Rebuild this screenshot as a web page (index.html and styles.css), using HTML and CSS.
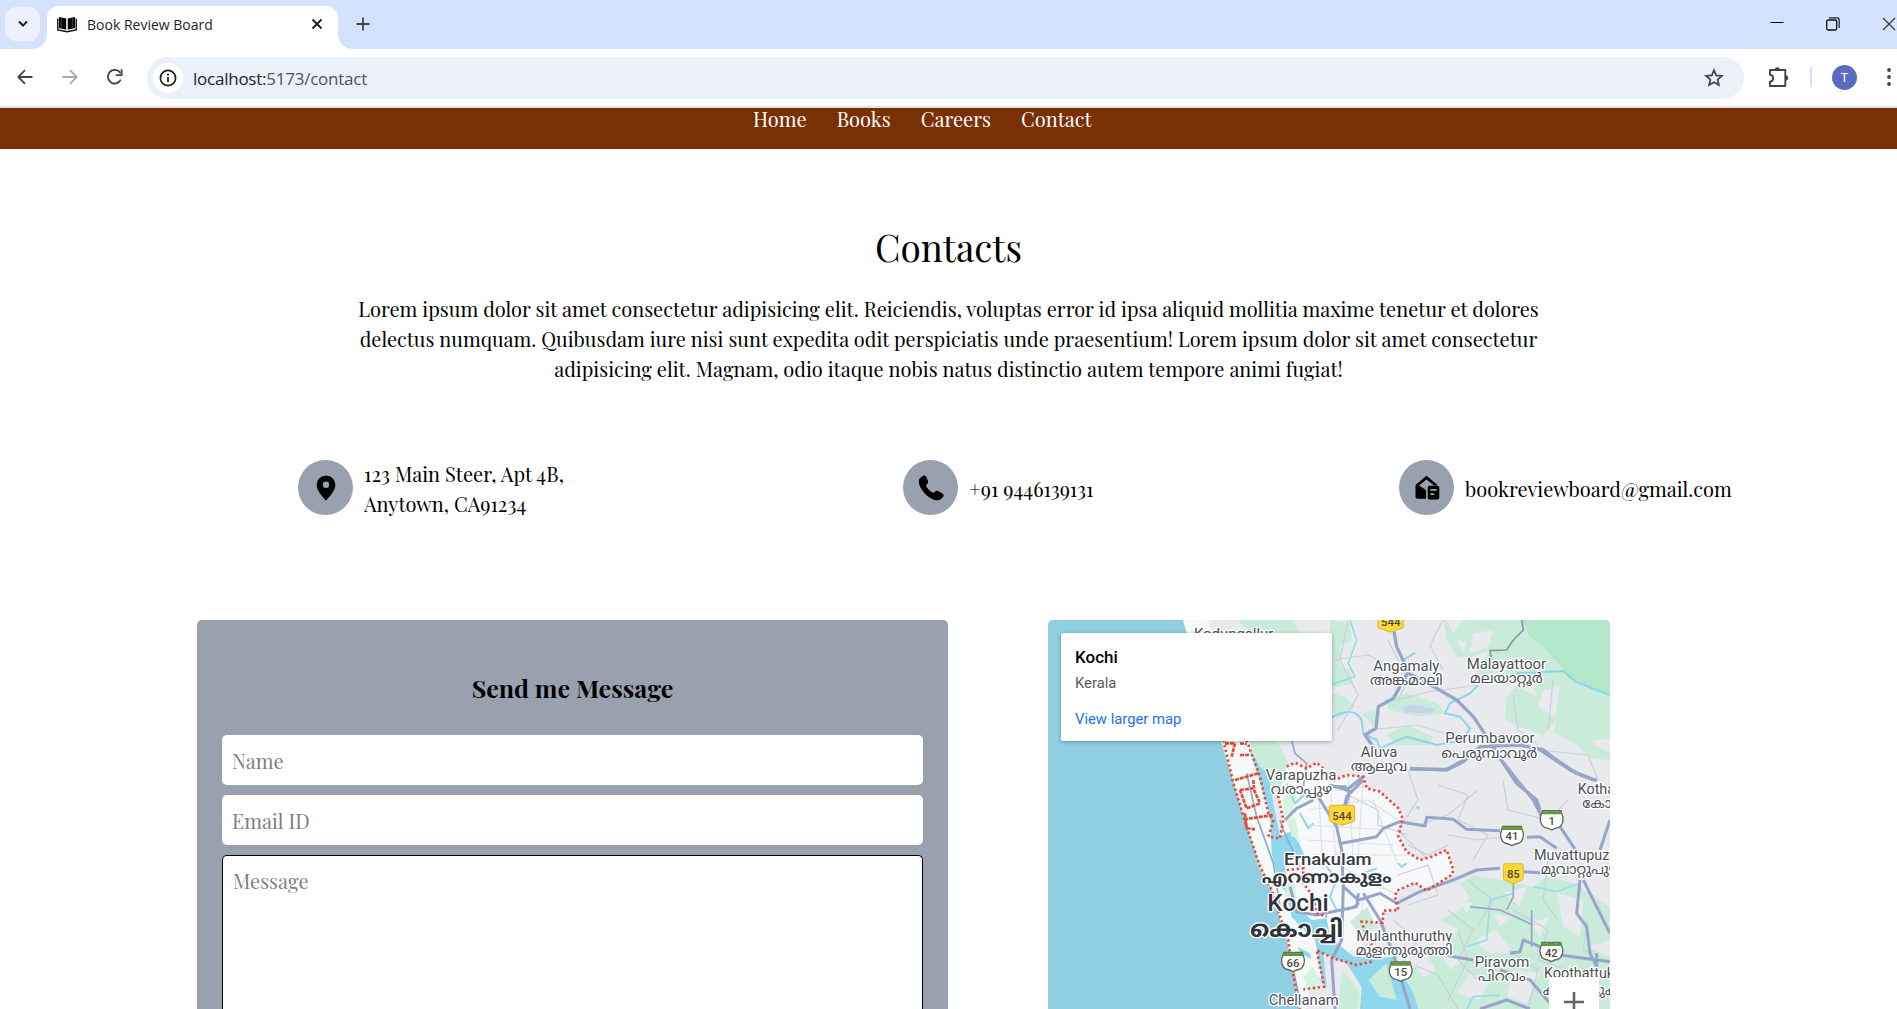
FILE: index.html
```html
<!DOCTYPE html>
<html lang="en">
<head>
<meta charset="utf-8">
<title>Book Review Board</title>
<link rel="stylesheet" href="styles.css">
</head>
<body>
<header class="tabstrip">
  <div class="tab-search"><svg width="12" height="8" viewBox="0 0 12 8"><path d="M2 1.5 6 5.5 10 1.5" fill="none" stroke="#1f1f1f" stroke-width="2"/></svg></div>
  <div class="tab">
    <svg class="favicon" width="20" height="17" viewBox="0 0 20 17"><path d="M2 1 9.2 2.6V13.8L2 12ZM18 1 10.8 2.6V13.8L18 12Z" fill="#000"/><path d="M.8 2.5V14L10 15.8 19.2 14V2.5" fill="none" stroke="#111" stroke-width="1.4"/><path d="M4.2 2V12.2M15.8 2V12.2" stroke="#777" stroke-width=".6"/></svg>
    <span class="tab-title">Book Review Board</span>
    <svg class="tab-close" width="12" height="12" viewBox="0 0 12 12"><path d="M1.5 1.5 10.5 10.5M10.5 1.5 1.5 10.5" stroke="#1f1f1f" stroke-width="1.9"/></svg>
  </div>
  <svg class="new-tab" width="14" height="14" viewBox="0 0 14 14"><path d="M7 .5V13.5M.5 7H13.5" stroke="#444" stroke-width="1.8"/></svg>
  <div class="window-controls">
    <svg width="14" height="14" viewBox="0 0 14 14"><path d="M.5 5.5H13.5" stroke="#000"/></svg>
    <svg width="14" height="14" viewBox="0 0 14 14"><path d="M3 .8H11Q13.2.8 13.2 3V11" fill="none" stroke="#222" stroke-width="1.2"/><rect x=".7" y="3" width="10" height="10" rx="1.5" fill="none" stroke="#111" stroke-width="1.3"/></svg>
    <svg width="14" height="14" viewBox="0 0 14 14"><path d="M1 1 13 13M13 1 1 13" stroke="#333" stroke-width="1.1"/></svg>
  </div>
</header>
<div class="toolbar">
  <svg class="back" width="16" height="16" viewBox="0 0 16 16"><path d="M15.5 8H1.500M8 1.200 1.300 8 8 14.800" fill="none" stroke="#444" stroke-width="1.800"/></svg>
  <svg class="forward" width="16" height="16" viewBox="0 0 16 16"><path d="M.5 8H14.500M8 1.200 14.700 8 8 14.800" fill="none" stroke="#aaa" stroke-width="1.800"/></svg>
  <svg class="reload" width="16" height="16" viewBox="0 0 16 16"><path d="M13.800 10.700A6.800 6.800 0 1 1 13.400 4" fill="none" stroke="#444" stroke-width="1.800"/><path d="M14.600.3V6.200H8.800" fill="none" stroke="#444" stroke-width="1.800"/></svg>
  <div class="address">
    <span class="info"><svg width="18" height="18" viewBox="0 0 18 18"><circle cx="9" cy="9" r="7.600" fill="none" stroke="#1f1f1f" stroke-width="1.700"/><path d="M9 8V13M9 4.800V6.600" stroke="#1f1f1f" stroke-width="1.800"/></svg></span>
    <span class="url">localhost:<span class="path">5173/contact</span></span>
    <svg class="star" width="20" height="20" viewBox="0 0 20 20"><path d="M10 2.200 12.200 7.400 17.900 7.900 13.600 11.600 14.900 17.100 10 14.200 5.100 17.100 6.400 11.600 2.100 7.900 7.800 7.400Z" fill="none" stroke="#444" stroke-width="1.700"/></svg>
  </div>
  <svg class="extensions" width="22" height="22" viewBox="0 0 22 22"><path d="M2 4H17.300V20H2V15.600Q5.100 15.200 5.100 12.200T2 8.800Z" fill="none" stroke="#444" stroke-width="1.900" stroke-linejoin="round"/><path d="M6.700 4a2.600 2.800 0 0 1 5.200 0ZM17.300 9.200a2.900 2.700 0 0 1 0 5.400Z" fill="#444"/></svg>
  <span class="divider"></span>
  <span class="avatar">T</span>
  <svg class="menu" width="4" height="18" viewBox="0 0 4 18"><g fill="#444"><circle cx="2" cy="2" r="1.900"/><circle cx="2" cy="9" r="1.900"/><circle cx="2" cy="16" r="1.900"/></g></svg>
</div>

<nav class="site-nav">
  <a>Home</a><a>Books</a><a>Careers</a><a>Contact</a>
</nav>

<main>
  <h1>Contacts</h1>
  <p class="intro">
    <span>Lorem ipsum dolor sit amet consectetur adipisicing elit. Reiciendis, voluptas error id ipsa aliquid mollitia maxime tenetur et dolores</span>
    <span>delectus numquam. Quibusdam iure nisi sunt expedita odit perspiciatis unde praesentium! Lorem ipsum dolor sit amet consectetur</span>
    <span>adipisicing elit. Magnam, odio itaque nobis natus distinctio autem tempore animi fugiat!</span>
  </p>
  <section class="details">
    <div class="detail">
      <span class="badge"><svg width="20" height="26" viewBox="0 0 20 26"><path fill-rule="evenodd" d="M10 .5A9.400 9.400 0 0 0 .6 9.900C.6 16.300 10 25.500 10 25.500S19.400 16.300 19.400 9.900A9.400 9.400 0 0 0 10 .5ZM10 6.500a3.200 3.200 0 1 1 0 6.400 3.200 3.200 0 0 1 0-6.400Z"/></svg></span>
      <p><span>123 Main Steer, Apt 4B,</span><span>Anytown, CA91234</span></p>
    </div>
    <div class="detail">
      <span class="badge"><svg width="26" height="26" viewBox="0 0 26 26"><path d="M5 .8 1.800 3.200C-.8 6 1.800 13.500 7.300 18.900 12.800 24.300 19.800 26.900 22.800 24.300L25.200 21.700Q26.200 20.200 24.800 18.800L20.200 16Q18.500 15.200 17.200 16.400L15.500 17.800Q12.700 17 10.600 14.600 8.500 12.300 8 10.400L9.600 8.600Q10.600 7.200 9.900 5.600L8 1.500Q6.800-.2 5 .8Z"/></svg></span>
      <p class="single">+91 9446139131</p>
    </div>
    <div class="detail">
      <span class="badge"><svg width="26" height="26" viewBox="0 0 26 26"><path d="M2 9.500 12.500.8 23 9.500V10.500H20L12.500 4.600 5 10.500 12 15V23.800H3.500Q1.500 23.800 1.500 22V10.500Z"/><path fill-rule="evenodd" d="M15.500 10.800H23.500Q25.300 10.800 25.300 12.800V22.500Q25.300 24.500 23.500 24.500H15.500Q13.700 24.500 13.700 22.500V12.800Q13.700 10.800 15.500 10.800ZM16.300 14V15.700H22.700V14ZM16.300 18.300V20H20.300V18.300Z"/></svg></span>
      <p class="single">bookreviewboard@gmail.com</p>
    </div>
  </section>

  <section class="panels">
    <form class="message-form">
      <h2>Send me Message</h2>
      <input type="text" placeholder="Name">
      <input type="text" placeholder="Email ID">
      <textarea placeholder="Message"></textarea>
    </form>
    <div class="map">
      <svg class="map-canvas" width="562" height="389" viewBox="0 0 562 389">
        <defs>
          <g id="shield"><path d="M-28-28H28Q30-18 34-8 36 12 22 22 10 24 0 30-10 24-22 22-36 12-34-8-30-18-28-28Z" fill="#fff" stroke="#666" stroke-width="4"/><path d="M-29-29Q-15-22 0-29 15-22 29-29L32-17H-32Z" fill="#5c9a38"/></g>
          <g id="highway"><path d="M-32-30H32Q38-30 38-22V14Q38 20 28 21L0 30-28 21Q-38 20-38 14V-22Q-38-30-32-30Z" fill="#fdd736" stroke="#d9b92d" stroke-width="3"/></g>
        </defs>
        <rect width="562" height="389" fill="#e8eaed"/>
        <!-- northern hills and fields -->
        <g transform="translate(282 -10) scale(.33333)">
          <path fill="#c9ebd9" d="M340 30H840V450L780 445 735 400 670 370 680 330 640 375 580 355 525 330 530 260 570 215 520 225 470 215 440 190 480 120 430 140 380 140 350 90ZM0 30 60 40 65 90 0 130ZM0 160 60 180 70 220 0 235ZM0 250 45 260 75 290 20 330ZM95 310 150 300 130 350ZM160 270 230 250 320 280 350 310 260 320 180 300ZM170 375 230 345 310 380 300 405 200 405Z"/>
          <path fill="#b4e6c9" d="M575 30H840V255L730 210 690 165 640 110 600 80Z"/>
          <path fill="#e8eaed" d="M430 70 490 60 475 110 420 130ZM350 30 400 30 370 70ZM640 240 690 230 675 320 625 290ZM470 190 540 190 520 220ZM580 240 610 225 620 260ZM735 375 780 395 840 385V430L790 400ZM380 90 410 95 400 125Z"/>
          <path fill="#c8d3e8" d="M215 295 240 283 320 298 300 310 225 308Z"/>
        </g>
        <!-- eastern fields -->
        <g transform="translate(132 120) scale(.33333)">
          <path fill="#c9ebd9" d="M840 430 880 405 960 420 1060 440 1100 410 1180 430 1290 500V807H800L730 790 720 720 770 690 735 640 760 620 820 640 800 590 840 570 780 540 840 510 870 470Z"/>
          <path fill="#e8eaed" d="M900 590 950 570 1000 640 930 640 890 610ZM970 460 1040 440 1020 500ZM1050 550 1110 530 1080 590ZM1130 460 1210 480 1200 590 1150 560ZM870 700 930 720 900 780 830 760ZM1000 690 1080 700 1040 790 980 770ZM840 480 880 490 860 520ZM1220 620 1290 600V650ZM790 650 850 660 810 690ZM940 520 990 530 960 560Z"/>
          <path fill="#c9ebd9" d="M680 690 710 680 790 807H700ZM220 0H290L340 100 330 250 250 90Z"/>
        </g>
        <g transform="translate(-8 -10) scale(.33333)">
          <path fill="#c9ebd9" d="M590 30H760L780 70H640ZM620 393H690L730 480 700 520 620 440ZM870 70H900V230L875 210Z"/>
        </g>
        <!-- sea, backwaters and city area -->
        <path fill="#90cfe1" d="M0 0H135L141 22 155 60 174 120 186 163 199 207 212 247 224 271 232 298 240 324 244 347 249 374 252 389H0Z"/>
        <path fill="#f4fbf6" d="M135 0H160L180 60 201 120 211 150 223 190 235 250 249 290 266 324 267 345 257 389H252L244 347 240 324 232 298 224 271 199 207 186 163Z"/>
        <g transform="translate(132 120) scale(.33333)">
          <path fill="#f7f8fa" d="M320 80 345 68 380 85 410 68 435 90 470 120 500 105 550 110 560 145 600 155 655 205 668 235 655 290 680 335 720 360 755 350 800 330 820 390 815 405 740 452 705 428 650 452 655 510 610 512 608 548 545 545 550 620 480 640 420 570 340 520 300 400 310 270 295 170Z"/>
          <path fill="#8fd7ec" d="M205 20 240 80 265 100 280 190 300 290 340 270 370 340 350 360 320 350 315 390 330 440 350 500 395 540 440 535 450 590 520 650 600 655 640 650 700 760 715 807H540L545 740 500 670 430 640 440 740 420 720 400 660 360 640 335 580 330 530 300 450 275 340 270 230 235 110Z"/>
          <path fill="#f7f8fa" d="M285 430 315 450 335 530 365 565 405 600 412 640 425 720 405 700 390 640 350 620 325 600 300 520ZM345 410 380 420 405 490 420 530 390 520 360 480Z"/>
          <path fill="#c9ebd9" d="M565 720 620 670 650 780 600 770ZM490 690 540 760 530 807H470ZM510 545 560 500 590 560 540 590Z"/>
          <path fill="#d5f4dd" d="M310 170 350 150 340 210 310 230ZM320 240 345 230 360 310 335 290ZM220 340 245 390 270 450 240 390ZM370 710 400 680 425 740 380 745ZM310 410 340 400 350 490 320 470Z"/>
          <path fill="none" stroke="#8fd7ec" stroke-width="6" d="M360 220 385 265 400 250M440 380 470 420 450 470 470 510M550 400 590 385M655 370 665 380 680 370M320 130 345 190 390 150M710 200 718 206M340 290 370 345M500 510 540 490"/>
        </g>
        <!-- rivers -->
        <g transform="translate(282 -10) scale(.33333)" fill="none" stroke="#8fd5e8" stroke-width="6">
          <path d="M0 325Q70 285 95 330L100 370 140 390 150 415 230 380 320 405 400 390 420 355 390 320 345 310 360 280 420 250 445 225M560 190 700 183 735 215 800 240 840 255M220 150 255 128"/>
          <path stroke-width="4" d="M60 30 80 90 55 160 75 200 0 225"/>
        </g>
        <g transform="translate(132 120) scale(.33333)" fill="none" stroke="#9edae8" stroke-width="5">
          <path d="M1000 460 930 480 925 550 920 600 860 620M860 807 880 770 960 765M1060 440 1130 455 1200 430"/>
        </g>
        <!-- local roads -->
        <g fill="none" stroke="#c9d0dc" stroke-width="1.200">
          <path d="M300 0 292 40 310 75 290 110M340 20 360 60 350 80M395 0 382 25 395 50M285 40 320 35 350 50M330 85 380 72 430 65M320 110 370 105 410 118 450 122M465 75 470 110 490 125M505 60 500 110M490 130 540 135 550 160M360 150 370 180 350 210 380 240M390 165 420 175 410 200 440 215 425 240M300 175 330 190 330 205 360 215M370 205 400 195 430 170M455 160 460 190 500 200 520 180M360 225 380 235 400 225M400 215 430 220 470 215M350 255 380 245 390 275 360 285M345 300 370 320 350 350M400 290 425 310 410 340 430 360M420 260 445 280 430 305M465 290 500 310 490 340 520 350M500 240 495 280 510 300M530 230 560 240M540 300 535 330 560 340M400 380 420 340 410 310M480 389 490 350 460 330M366 345 390 355 410 389"/>
          <path stroke="#dce1ea" d="M255 175 330 165M262 190 320 180 350 200M270 160 275 250M282 165 288 240M300 155 305 235M315 160 310 240M260 205 340 210M260 220 345 225M265 235 370 235M325 180 350 245M290 245 360 280M300 260 340 270M315 280 310 315"/>
        </g>
        <!-- highways -->
        <g transform="translate(132 120) scale(.33333)" fill="none" stroke="#96a5c8" stroke-width="9" stroke-linejoin="round">
          <path d="M550 120 500 170 485 240M415 170 470 260 485 330 490 440 485 600 455 660 465 807M485 310 590 290 610 265 660 245 735 258 740 232 820 238 860 268 960 272M480 140 500 145 510 160M315 240 350 205 400 180M460 140H500M690 88 800 88 860 55M960 55 1020 130 1060 180 1090 240M1080 30 1170 90 1240 120M1040 292 1080 290 1130 325M1140 260 1190 335M1290 240 1260 330M330 440 350 515 410 525 530 500 535 460M490 440 535 480 600 460 650 490 720 455 820 420 890 390 960 385M1030 395 1100 400M550 460 600 540 640 640 690 807M1200 420 1190 520 1220 560 1230 640 1250 680M1210 420 1250 500 1290 580M710 620 820 650 880 660M990 640 1020 635 1030 600 1080 620M1140 645 1290 665M960 690 1050 720 1110 790M1050 807 980 780 900 807M1250 640V740"/>
          <path stroke-width="5" d="M200 100 230 230 280 370 300 500M300 240 310 270 360 380M335 0 345 40 380 70 370 140M340 690 355 760M870 500 960 510 1060 555M1000 430V470L980 510M1055 510V620"/>
        </g>
        <g transform="translate(282 -10) scale(.33333)" fill="none" stroke="#96a5c8" stroke-width="10" stroke-linejoin="round">
          <path d="M192 65 200 110 235 185 190 265 145 290 138 355 105 375 150 440M235 190 320 235 380 270 430 320 470 380 520 460 560 520 620 570 630 600M240 475 350 480 400 455 450 410 570 405 640 420 680 450 740 490 800 512M0 525 50 540 100 500M60 540 45 590"/>
          <path stroke-width="5" stroke="#8f93a4" d="M575 30 580 60 550 90 530 120 480 122 485 150"/>
        </g>
        <!-- municipal boundary -->
        <g transform="translate(132 120) scale(.33333)" fill="none" stroke="#e8483c" stroke-width="8" stroke-dasharray="7 8">
          <path d="M320 80 345 68 380 85 410 68 435 90M460 122 500 105 550 110 560 145 600 155 655 205 668 235 655 290 680 335 720 360 755 350 800 330 820 390 815 405 740 452 705 428 650 452 645 470 655 510 610 512 608 548 545 545 555 575 575 615M575 665 530 675 460 655 410 630 433 740 370 748"/>
          <path d="M130 0 160 130 200 260 240 380 275 450 300 530 325 600 335 680 350 760 360 807M200 0 240 110 265 220 280 240 275 260 265 290 300 295 310 240 295 170 300 140M320 390 370 385 370 430 400 470 410 520 440 530"/>
          <path stroke-dasharray="12 3" d="M135 10 165 10 155 50M165 120 235 100M180 150 220 145 240 190 200 205 180 150M220 120 222 145M192 238 280 225M195 220 200 265 225 268M180 10 200 12M180 45 210 45"/>
        </g>
        <!-- route shields -->
        <g transform="translate(132 120) scale(.33333)" class="routes">
          <use href="#highway" x="486" y="226"/><text x="486" y="239">544</text>
          <use href="#highway" transform="translate(1000 401) scale(.78 1)"/><text x="1000" y="414">85</text>
          <use href="#highway" x="632" y="-354"/><text x="632" y="-341">544</text>
          <use href="#shield" x="1115" y="240"/><text x="1115" y="254">1</text>
          <use href="#shield" x="996" y="287"/><text x="996" y="301">41</text>
          <use href="#shield" x="1114" y="635"/><text x="1114" y="650">42</text>
          <use href="#shield" x="339" y="665"/><text x="339" y="680">66</text>
          <use href="#shield" x="662" y="694"/><text x="662" y="708">15</text>
        </g>
        <!-- place names -->
        <g class="places" transform="translate(-8 -10) scale(.33333)"><text x="462" y="86" textLength="238" lengthAdjust="spacingAndGlyphs">Kodungallur</text></g>
        <g class="places" transform="translate(282 -10) scale(.33333)">
          <text x="130" y="184" textLength="198" lengthAdjust="spacingAndGlyphs">Angamaly</text><text x="120" y="226" textLength="218" lengthAdjust="spacingAndGlyphs" class="ml">അങ്കമാലി</text>
          <text x="410" y="177" textLength="238" lengthAdjust="spacingAndGlyphs">Malayattoor</text><text x="420" y="219" textLength="218" lengthAdjust="spacingAndGlyphs" class="ml">മലയാറ്റൂർ</text>
          <text x="346" y="400" textLength="268" lengthAdjust="spacingAndGlyphs">Perumbavoor</text><text x="334" y="444" textLength="288" lengthAdjust="spacingAndGlyphs" class="ml">പെരുമ്പാവൂർ</text>
        </g>
        <g class="places" transform="translate(132 120) scale(.33333)">
          <text x="542" y="50" textLength="110" lengthAdjust="spacingAndGlyphs">Aluva</text><text x="512" y="92" textLength="170" lengthAdjust="spacingAndGlyphs" class="ml">ആലുവ</text>
          <text x="257" y="119" textLength="212" lengthAdjust="spacingAndGlyphs">Varapuzha</text><text x="272" y="162" textLength="184" lengthAdjust="spacingAndGlyphs" class="ml">വരാപ്പുഴ</text>
          <text x="1193" y="162">Kothamangalam</text><text x="1207" y="204" class="ml">കോതമംഗലം</text>
          <text x="1062" y="360">Muvattupuzha</text><text x="1082" y="402" textLength="232" lengthAdjust="spacingAndGlyphs" class="ml">മുവാറ്റുപുഴ</text>
          <text x="529" y="604" textLength="288" lengthAdjust="spacingAndGlyphs">Mulanthuruthy</text><text x="527" y="646" textLength="291" lengthAdjust="spacingAndGlyphs" class="ml">മുളന്തുരുത്തി</text>
          <text x="884" y="682" textLength="164" lengthAdjust="spacingAndGlyphs">Piravom</text><text x="894" y="724" textLength="143" lengthAdjust="spacingAndGlyphs" class="ml">പിറവം</text>
          <text x="1092" y="713">Koothattukulam</text><text x="1088" y="764" class="ml">കൂത്താട്ടുകുളം</text>
          <text x="266" y="796" textLength="210" lengthAdjust="spacingAndGlyphs">Chellanam</text>
          <text x="312" y="375" textLength="263" lengthAdjust="spacingAndGlyphs" class="town">Ernakulam</text><text x="245" y="430" textLength="390" lengthAdjust="spacingAndGlyphs" class="town ml">എറണാകുളം</text>
          <text x="262" y="514" textLength="184" lengthAdjust="spacingAndGlyphs" class="city">Kochi</text><text x="210" y="590" textLength="280" lengthAdjust="spacingAndGlyphs" class="city ml">കൊച്ചി</text>
        </g>
      </svg>
      <div class="place-card"><strong>Kochi</strong><span>Kerala</span><a>View larger map</a></div>
      <div class="zoom-in"><svg width="20" height="20" viewBox="0 0 20 20"><path d="M10 0V20M0 10H20" stroke="#666" stroke-width="2.600"/></svg></div>
    </div>
  </section>
</main>
</body>
</html>
```
FILE: styles.css
```css
* { box-sizing: border-box; }
body { margin: 0; height: 1009px; overflow: hidden; background: #fff; color: #000; font-family: "Playfair Display", "Liberation Serif", serif; font-size: 20px; }
svg { display: block; flex: none; }
p, h1, h2 { margin: 0; }

.tabstrip { display: flex; height: 49px; background: #d3e3fd; font-family: "Open Sans", sans-serif; }
.tab-search { width: 35px; height: 34px; margin: 7px 7px 0 5px; border-radius: 11px; background: #ebf1fe; display: flex; align-items: center; justify-content: center; }
.tab { position: relative; width: 291px; height: 43px; margin-top: 6px; border-radius: 12px 12px 0 0; background: #fff; display: flex; align-items: center; padding: 0 15px 7px 10px; }
.tab::before, .tab::after { content: ""; position: absolute; bottom: 0; width: 14px; height: 14px; }
.tab::before { left: -14px; background: radial-gradient(circle at 0 0, transparent 13.5px, #fff 14px); }
.tab::after { right: -14px; background: radial-gradient(circle at 100% 0, transparent 13.5px, #fff 14px); }
.tab-title { margin-left: 10px; font-size: 14px; color: #1f1f1f; white-space: nowrap; }
.tab-close { margin-left: auto; }
.new-tab { margin: 17px 0 0 18px; }
.window-controls { display: flex; gap: 42px; margin: 17px 1px 0 auto; }

.toolbar { display: flex; align-items: center; height: 59px; padding-bottom: 1px; border-bottom: 2px solid #dfe3e2; font-family: "Open Sans", sans-serif; }
.back { margin-left: 17px; }
.forward { margin-left: 29px; }
.reload { margin-left: 29px; }
.address { display: flex; align-items: center; width: 1597px; height: 42px; margin: 2px 0 0 24px; padding: 0 20px 0 6px; border-radius: 21px; background: #ebf0f9; }
.info { width: 30px; height: 30px; border-radius: 50%; background: #fff; display: flex; align-items: center; justify-content: center; }
.url { margin-left: 10px; font-size: 17px; letter-spacing: -.24px; color: #1f1f1f; white-space: nowrap; }
.path { color: #555; }
.star { margin-left: auto; }
.extensions { margin-left: 24px; }
.divider { width: 2px; height: 20px; margin-left: 20px; background: #d3e3fd; }
.avatar { width: 25px; height: 25px; margin-left: 20px; border-radius: 50%; background: #5c6bc0; color: #fff; font: 13px/25px Roboto, sans-serif; text-align: center; }
.menu { margin-left: 30px; }

.site-nav { display: flex; gap: 30px; height: 41px; padding-left: 753px; background: #7a3005; color: #fff; line-height: 22px; }
h1 { margin-top: 74px; text-align: center; font-size: 37px; line-height: 48px; font-weight: 400; }
.intro { display: flex; flex-direction: column; align-items: center; margin-top: 23px; line-height: 30px; white-space: nowrap; }
.details { display: grid; grid-template-columns: 605px 496px 1fr; height: 60px; margin-top: 76px; padding-left: 298px; line-height: 30px; }
.detail { display: flex; gap: 11px; white-space: nowrap; }
.detail p { display: flex; flex-direction: column; align-items: flex-start; margin-top: -1px; }
.detail .single { padding-top: 15px; }
.badge { width: 55px; height: 55px; border-radius: 50%; background: #9aa1ae; display: flex; align-items: center; justify-content: center; }

.panels { display: flex; gap: 100px; height: 389px; margin-top: 100px; padding-left: 197px; overflow: hidden; }
.message-form { display: flex; flex-direction: column; gap: 10px; width: 751px; height: 389px; padding: 49px 25px 0; border-radius: 5px 5px 0 0; background: #9aa1ae; }
h2 { margin-bottom: 18px; text-align: center; font-size: 25px; line-height: 38px; }
input, textarea { display: block; width: 100%; padding: 0 10px; border: 0; border-radius: 5px; background: #fff; font: inherit; resize: none; flex: none; }
input { height: 50px; }
textarea { height: 154px; padding: 10px; border: 1px solid #000; border-bottom: 0; border-radius: 5px 5px 0 0; line-height: 30px; }
::placeholder { color: #808080; opacity: 1; }

.map { position: relative; width: 562px; height: 389px; overflow: hidden; border-radius: 5px 5px 0 0; }
.places text { font: 43px Roboto, "Noto Sans Malayalam", sans-serif; fill: #4c4f55; stroke: #fff; stroke-width: 8px; stroke-linejoin: round; paint-order: stroke; }
.places .ml { font-size: 41px; }
.places .town { font-size: 52px; font-weight: 500; fill: #35383d; }
.places .city { font-size: 71px; font-weight: 500; fill: #303338; }
.places .town.ml { font-size: 50px; font-weight: 700; }
.places .city.ml { font-size: 70px; font-weight: 700; }
.routes text { font: 500 34px Roboto, sans-serif; fill: #4a4a40; text-anchor: middle; }
.place-card { position: absolute; left: 13px; top: 13px; width: 271px; height: 108px; padding: 13px 14px; border-radius: 2px; background: #fff; box-shadow: 0 1px 4px rgba(0,0,0,.3); display: flex; flex-direction: column; font: 14.8px/20px Roboto, sans-serif; color: #5b5b5b; }
.place-card strong { font-size: 17px; line-height: 22px; font-weight: 500; color: #000; margin-bottom: 5px; }
.place-card a { margin-top: 16px; color: #1a73e8; }
.zoom-in { position: absolute; left: 501px; top: 357px; width: 50px; height: 50px; background: #fff; display: flex; justify-content: center; padding-top: 15px; }
```
